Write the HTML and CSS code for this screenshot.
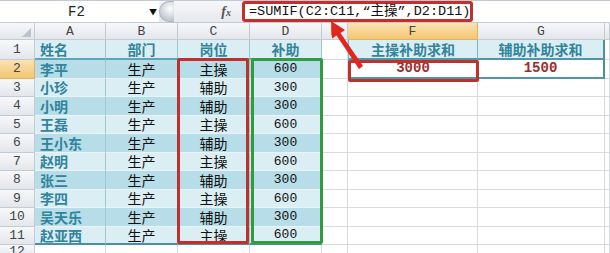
FILE: index.html
```html
<!DOCTYPE html>
<html>
<head>
  <title>SUMIF 补助求和</title>
  <link rel="stylesheet" href="styles.css">
</head>
<body>

  <!-- Formula bar -->
  <div class="formula-bar">
    <div class="name-box"><span class="name">F2</span><span class="drop">▼</span></div>
    <div class="fx-area"><span class="knob"></span><span class="fx">f<i>x</i></span></div>
    <div class="formula">=SUMIF(C2:C11,“主操”,D2:D11)</div>
  </div>

  <!-- Sheet -->
  <div class="sheet">
    <div class="row">
      <div class="corner"></div>
      <div class="ch">A</div><div class="ch">B</div><div class="ch">C</div><div class="ch">D</div>
      <div class="ch">E</div><div class="ch sel">F</div><div class="ch">G</div><div class="ch"></div>
    </div>
    <div class="row light head">
      <div class="rh">1</div>
      <div class="c t a">姓名</div><div class="c t b">部门</div><div class="c t b">岗位</div><div class="c t b">补助</div>
      <div class="c"></div><div class="c s-head s-left">主操补助求和</div><div class="c s-head s-right">辅助补助求和</div><div class="c"></div>
    </div>
    <div class="row dark">
      <div class="rh sel">2</div>
      <div class="c t a">李平</div><div class="c t">生产</div><div class="c t">主操</div><div class="c t num">600</div>
      <div class="c"></div><div class="c s-val s-left">3000</div><div class="c s-val s-right">1500</div><div class="c"></div>
    </div>
    <div class="row light">
      <div class="rh">3</div>
      <div class="c t a">小珍</div><div class="c t">生产</div><div class="c t">辅助</div><div class="c t num">300</div>
      <div class="c"></div><div class="c"></div><div class="c"></div><div class="c"></div>
    </div>
    <div class="row dark">
      <div class="rh">4</div>
      <div class="c t a">小明</div><div class="c t">生产</div><div class="c t">辅助</div><div class="c t num">300</div>
      <div class="c"></div><div class="c"></div><div class="c"></div><div class="c"></div>
    </div>
    <div class="row light">
      <div class="rh">5</div>
      <div class="c t a">王磊</div><div class="c t">生产</div><div class="c t">主操</div><div class="c t num">600</div>
      <div class="c"></div><div class="c"></div><div class="c"></div><div class="c"></div>
    </div>
    <div class="row dark">
      <div class="rh">6</div>
      <div class="c t a">王小东</div><div class="c t">生产</div><div class="c t">辅助</div><div class="c t num">300</div>
      <div class="c"></div><div class="c"></div><div class="c"></div><div class="c"></div>
    </div>
    <div class="row light">
      <div class="rh">7</div>
      <div class="c t a">赵明</div><div class="c t">生产</div><div class="c t">主操</div><div class="c t num">600</div>
      <div class="c"></div><div class="c"></div><div class="c"></div><div class="c"></div>
    </div>
    <div class="row dark">
      <div class="rh">8</div>
      <div class="c t a">张三</div><div class="c t">生产</div><div class="c t">辅助</div><div class="c t num">300</div>
      <div class="c"></div><div class="c"></div><div class="c"></div><div class="c"></div>
    </div>
    <div class="row light">
      <div class="rh">9</div>
      <div class="c t a">李四</div><div class="c t">生产</div><div class="c t">主操</div><div class="c t num">600</div>
      <div class="c"></div><div class="c"></div><div class="c"></div><div class="c"></div>
    </div>
    <div class="row dark">
      <div class="rh">10</div>
      <div class="c t a">吴天乐</div><div class="c t">生产</div><div class="c t">辅助</div><div class="c t num">300</div>
      <div class="c"></div><div class="c"></div><div class="c"></div><div class="c"></div>
    </div>
    <div class="row light last">
      <div class="rh">11</div>
      <div class="c t a">赵亚西</div><div class="c t">生产</div><div class="c t">主操</div><div class="c t num">600</div>
      <div class="c"></div><div class="c"></div><div class="c"></div><div class="c"></div>
    </div>
    <div class="row">
      <div class="rh">12</div>
      <div class="c"></div><div class="c"></div><div class="c"></div><div class="c"></div>
      <div class="c"></div><div class="c"></div><div class="c"></div><div class="c"></div>
    </div>

    <!-- highlight boxes drawn over the cells -->
    <div class="mark mark-c"></div>
    <div class="mark mark-d"></div>
    <div class="mark mark-f"></div>
  </div>

  <svg class="arrow" width="610" height="253" viewBox="0 0 610 253">
    <polygon points="331,21 345,30 340.5,33 363,66 359,69 336.5,35.5 332,38.5" fill="#e2261f"/>
  </svg>

</body>
</html>
```

FILE: styles.css
```css
:root {
  --grid: #d6dbe3;
  --teal: #31849b;
  --band-light: #dbeef3;
  --band-dark: #b7dde8;
  --red: #c0302c;
  --green: #2f9d3f;
}

body {
  margin: 0;
  width: 610px;
  height: 253px;
  overflow: hidden;
  background: #fff;
  font-family: "Noto Sans CJK SC", sans-serif;
  position: relative;
}

/* ---------- formula bar ---------- */

.formula-bar {
  display: flex;
  align-items: center;
  height: 23px;
  box-sizing: border-box;
  border-top: 1px solid #c3cad4;
  border-bottom: 1px solid #c3cad4;
  background: #fff;
}

.name-box {
  width: 159px;
  display: flex;
  align-items: center;
}

.name {
  flex: 1;
  text-align: center;
  font-family: "Liberation Mono", monospace;
  font-size: 14px;
  color: #222;
  padding-left: 4px;
}

.drop {
  width: 10px;
  font-size: 8px;
  color: #111;
}

.fx-area {
  width: 83px;
  height: 21px;
  display: flex;
  align-items: center;
  background: linear-gradient(#f6f7f9, #e6e9ee);
}

.knob {
  width: 14px;
  height: 19px;
  border-radius: 10px 0 0 10px;
  background: radial-gradient(circle at 70% 35%, #fdfdfd, #c4cad2 70%);
  border: 1px solid #aeb5bf;
  border-right: none;
}

.fx {
  margin-left: auto;
  margin-right: 11px;
  font-family: "Liberation Serif", serif;
  font-style: italic;
  font-weight: bold;
  font-size: 14px;
  color: #555;
}

.fx i {
  font-size: 10px;
}

.formula {
  width: 231px;
  height: 21px;
  box-sizing: border-box;
  border: 3px solid var(--red);
  border-radius: 3px;
  padding-left: 4px;
  font-family: "Liberation Mono", "Noto Sans CJK SC", monospace;
  font-size: 13.5px;
  line-height: 15px;
  color: #111;
  white-space: nowrap;
}

/* ---------- sheet ---------- */

.sheet {
  position: relative;
  display: grid;
  grid-template-columns: 35px 71px 72px 72px 72px 26px 130px 127px 1fr;
  grid-template-rows: 17px 20px repeat(10, 18.5px) 1fr;
  height: 230px;
}

.row {
  display: contents;
}

.corner, .ch, .rh {
  box-sizing: border-box;
  background: linear-gradient(#f7f8fa, #e3e6eb);
  border-right: 1px solid #c5cbd3;
  border-bottom: 1px solid #c5cbd3;
  color: #444;
  font-family: "Liberation Mono", monospace;
  font-size: 13px;
  line-height: 1;
  display: flex;
  align-items: center;
  justify-content: center;
}

.corner {
  align-items: flex-end;
  justify-content: flex-end;
  padding: 0 3px 2px 0;
}

.corner::after {
  content: "";
  border-style: solid;
  border-width: 0 0 9px 9px;
  border-color: transparent transparent #b9c2cd transparent;
}

.ch.sel, .rh.sel {
  background: linear-gradient(#fae3b4, #f4c672);
  border-color: #e5b25c;
}

.c {
  box-sizing: border-box;
  border-right: 1px solid var(--grid);
  border-bottom: 1px solid var(--grid);
  font-size: 14px;
  color: #111;
  display: flex;
  align-items: center;
  justify-content: center;
  white-space: nowrap;
  line-height: 1;
}

.light .t { background: var(--band-light); }
.dark .t { background: var(--band-dark); }

.t {
  border-right-color: #9ec7d4;
  border-bottom-color: #e9f4f7;
}

.t.a {
  justify-content: flex-start;
  padding-left: 5px;
  font-weight: bold;
  color: var(--teal);
}

.t.b {
  font-weight: bold;
  color: var(--teal);
}

.head .t {
  border-bottom: 2px solid #5aa6bb;
}

.last .t {
  border-bottom: 2px solid #4a8fa3;
}

.num {
  font-family: "Liberation Mono", monospace;
  font-size: 13px;
}

/* summary block F1:G2 */

.s-head {
  background: var(--band-light);
  font-weight: bold;
  color: var(--teal);
  border-bottom: 2px solid #4f96aa;
}

.s-val {
  font-family: "Liberation Mono", monospace;
  font-weight: bold;
  color: #a32a2b;
  border-bottom: 2px solid #4f96aa;
}

.s-left {
  border-left: 1px solid #7fb3c2;
  border-right-color: #7fb3c2;
}

.s-right {
  border-right: 2px solid #4a8f9c;
}

/* red and green outlines laid over cells */

.mark {
  position: absolute;
  box-sizing: border-box;
  pointer-events: none;
  border-radius: 2px;
}

.mark-c {
  grid-column: 4 / 5;
  grid-row: 3 / 13;
  top: -2px;
  bottom: 1px;
  left: -1px;
  right: 1px;
  border: 3px solid var(--red);
}

.mark-d {
  grid-column: 5 / 6;
  grid-row: 3 / 13;
  top: -2px;
  bottom: 1px;
  left: 1px;
  right: -1px;
  border: 3px solid var(--green);
}

.mark-f {
  grid-column: 7 / 8;
  grid-row: 3 / 4;
  top: 0;
  bottom: -3px;
  left: 0;
  right: -1px;
  border: 3px solid var(--red);
}

.arrow {
  position: absolute;
  left: 0;
  top: 0;
  pointer-events: none;
}
```
